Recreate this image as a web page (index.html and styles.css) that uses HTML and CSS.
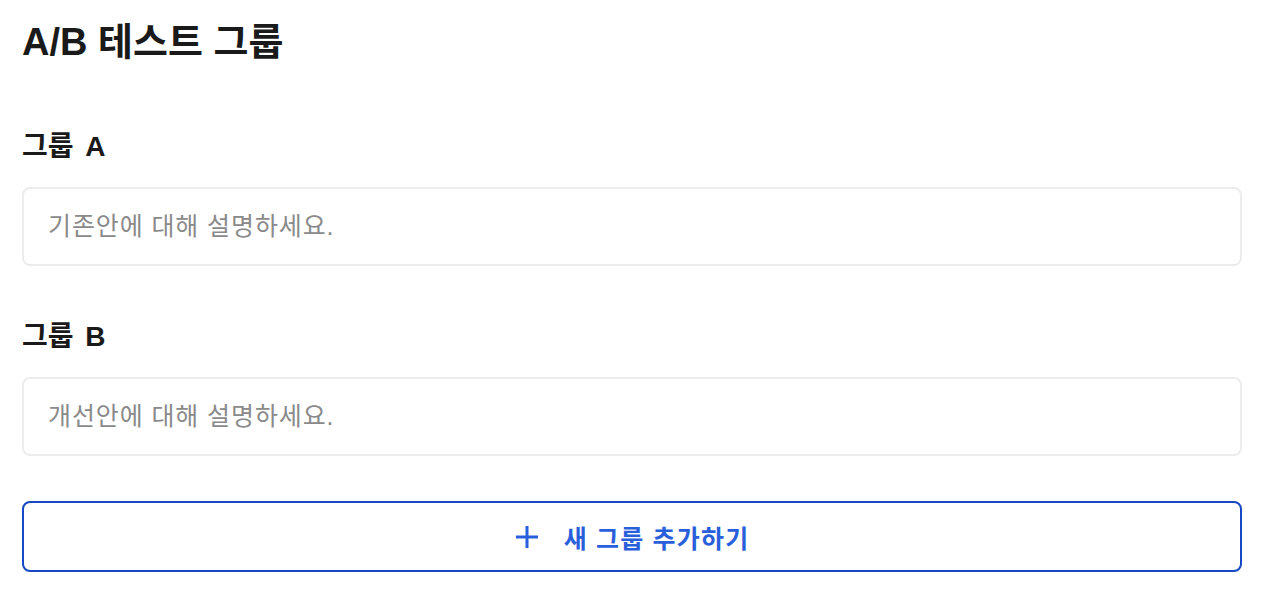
FILE: index.html
```html
<!DOCTYPE html>
<html lang="ko">
<head>
<meta charset="utf-8">
<title>A/B 테스트 그룹</title>
<link rel="stylesheet" href="styles.css">
</head>
<body>
<main class="page">
  <h1 class="title">A/B 테스트 그룹</h1>
  <section class="group">
    <label class="label" for="ga">그룹 A</label>
    <input id="ga" class="field" type="text" placeholder="기존안에 대해 설명하세요.">
  </section>
  <section class="group">
    <label class="label" for="gb">그룹 B</label>
    <input id="gb" class="field" type="text" placeholder="개선안에 대해 설명하세요.">
  </section>
  <button class="add" type="button">
    <svg class="plus" width="24" height="24" viewBox="0 0 24 24" aria-hidden="true">
      <path d="M12 1v22M1 12h22" stroke="currentColor" stroke-width="3" fill="none"/>
    </svg>
    <span>새 그룹 추가하기</span>
  </button>
</main>
</body>
</html>
```
FILE: styles.css
```css
* { box-sizing: border-box; }
html, body { margin: 0; background: #fff; }
body {
  font-family: "Liberation Sans", "Noto Sans CJK KR", sans-serif;
  color: #1a1a1a;
}
.page {
  padding: 16px 38px 0 22px;
  display: flex;
  flex-direction: column;
}
.title {
  margin: 0;
  font-size: 38px;
  font-weight: 700;
  line-height: 52px;
}
.group {
  display: flex;
  flex-direction: column;
  margin-top: 59px;
}
.group + .group { margin-top: 51px; }
.label {
  font-size: 28px;
  font-weight: 700;
  line-height: 40px;
  word-spacing: 4px;
  margin-bottom: 20px;
}
.field {
  height: 79px;
  border: 2px solid #ececec;
  border-radius: 8px;
  padding: 0 24px;
  font-family: inherit;
  font-size: 25px;
  letter-spacing: 0.9px;
  color: #333;
  outline: none;
}
.field::placeholder { color: #8a8a8a; }
.add {
  margin-top: 45px;
  height: 71px;
  border: 2px solid #1747c2;
  border-radius: 8px;
  background: #fff;
  color: #2a5fdb;
  font-family: inherit;
  font-size: 25px;
  font-weight: 700;
  letter-spacing: 1.2px;
  display: flex;
  align-items: center;
  justify-content: center;
  gap: 25px;
  cursor: pointer;
}
.plus { display: block; }
```
